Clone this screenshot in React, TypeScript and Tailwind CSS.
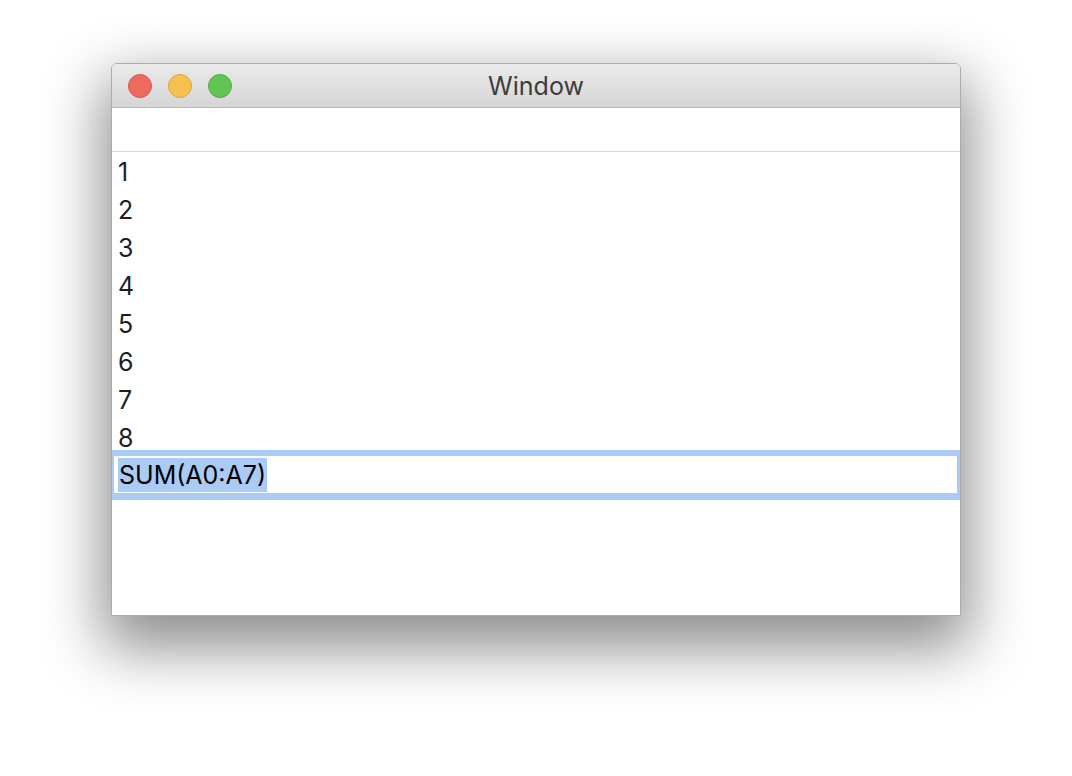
const rows = ['1', '2', '3', '4', '5', '6', '7', '8'];

function TrafficLight({ fill, edge }: { fill: string; edge: string }) {
  return <span className={`block h-[24px] w-[24px] rounded-full border ${fill} ${edge}`} />;
}

export default function App() {
  return (
    <div className="min-h-[776px] w-[1072px] bg-white pl-[111px] pt-[63px] font-['Inter','Liberation_Sans',sans-serif]">
      <div className="flex h-[553px] w-[850px] flex-col overflow-hidden rounded-t-[6px] border border-[#acacac] bg-white shadow-[0_24px_60px_8px_rgba(0,0,0,0.45)]">
        {/* title bar */}
        <div className="relative flex h-[44px] shrink-0 items-center border-b border-[#b9b9b9] bg-gradient-to-b from-[#ebebeb] to-[#d5d5d5] pl-[16px]">
          <div className="flex items-center gap-[16px] pt-[1px]">
            <TrafficLight fill="bg-[#ef6a5e]" edge="border-[#d8564b]" />
            <TrafficLight fill="bg-[#f7c14f]" edge="border-[#dea53c]" />
            <TrafficLight fill="bg-[#61c554]" edge="border-[#4bab3e]" />
          </div>
          <div className="absolute inset-0 flex items-center justify-center pt-[2px] text-[25px] text-[#3c3c3c]">Window</div>
        </div>

        {/* empty header field */}
        <div className="h-[44px] shrink-0 border-b border-[#d6d6d6]" />

        {/* cells */}
        <div className="flex flex-col text-[25px] text-[#1e1e1e]">
          {rows.map((r) => (
            <div key={r} className="h-[38px] pl-[6px] pt-[3px] leading-[35px]">
              {r}
            </div>
          ))}
          <div className="-mt-[6px] border-b-[7px] border-l-[2px] border-r-[3px] border-t-[6px] border-[#aacbf5]">
            <div className="flex h-[37px] items-center pl-[4px] pt-[1px]">
              <span className="bg-[#aacbf5] px-[1px] leading-[34px] text-black">SUM(A0:A7)</span>
            </div>
          </div>
        </div>
      </div>
    </div>
  );
}
